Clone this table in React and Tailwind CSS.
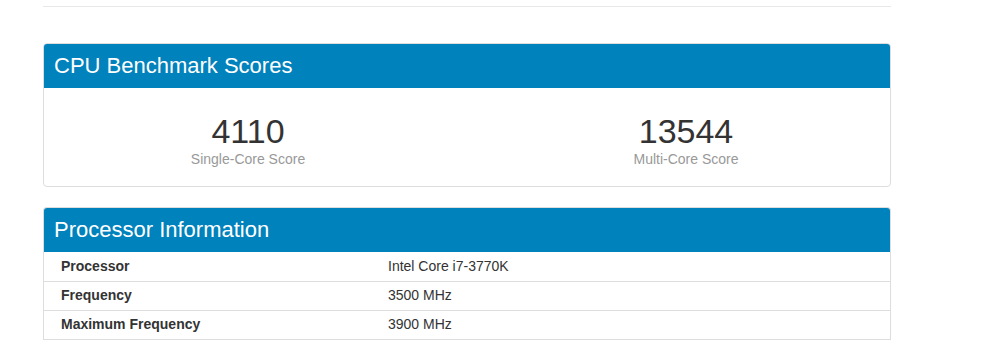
import React from 'react';

const rows = [
  { label: 'Processor', value: 'Intel Core i7-3770K' },
  { label: 'Frequency', value: '3500 MHz' },
  { label: 'Maximum Frequency', value: '3900 MHz' },
];

const scores = [
  { value: '4110', label: 'Single-Core Score' },
  { value: '13544', label: 'Multi-Core Score' },
];

export default function App() {
  return (
    <div className="min-h-[341px] bg-white font-['Liberation_Sans',Arial,sans-serif] text-[#333]">
      <div className="w-[848px] ml-[43px] pt-[6px]">
        <div className="h-px bg-[#e8e8e8] mb-[36px]"></div>

        {/* Benchmark scores */}
        <div className="border border-[#ddd] rounded-[4px] overflow-hidden mb-[20px]">
          <div className="h-[45px] bg-[#0082bc] flex items-center px-[11px] pt-px -mx-px -mt-px">
            <h2 className="text-[22px] text-white leading-none">CPU Benchmark Scores</h2>
          </div>
          <div className="grid grid-cols-2 -mx-[15px] pt-[25px] pb-[17px]">
            {scores.map(s => (
              <div key={s.label} className="flex flex-col items-center">
                <div className="text-[34px] leading-[36px] text-[#333]">{s.value}</div>
                <div className="text-[14px] leading-[20px] text-[#999]">{s.label}</div>
              </div>
            ))}
          </div>
        </div>

        {/* Processor info */}
        <div className="border-x border-t border-[#ddd] rounded-t-[4px] overflow-hidden">
          <div className="h-[45px] bg-[#0082bc] flex items-center px-[11px] pt-px -mx-px -mt-px">
            <h2 className="text-[22px] text-white leading-none">Processor Information</h2>
          </div>
          <table className="w-full border-collapse text-[14px]">
            <tbody>
              {rows.map(r => (
                <tr key={r.label} className="border-b border-[#ddd] h-[29px]">
                  <td className="w-[344px] pl-[17px] font-bold text-[#333]">{r.label}</td>
                  <td className="text-[#333]">{r.value}</td>
                </tr>
              ))}
            </tbody>
          </table>
        </div>
      </div>
    </div>
  );
}
